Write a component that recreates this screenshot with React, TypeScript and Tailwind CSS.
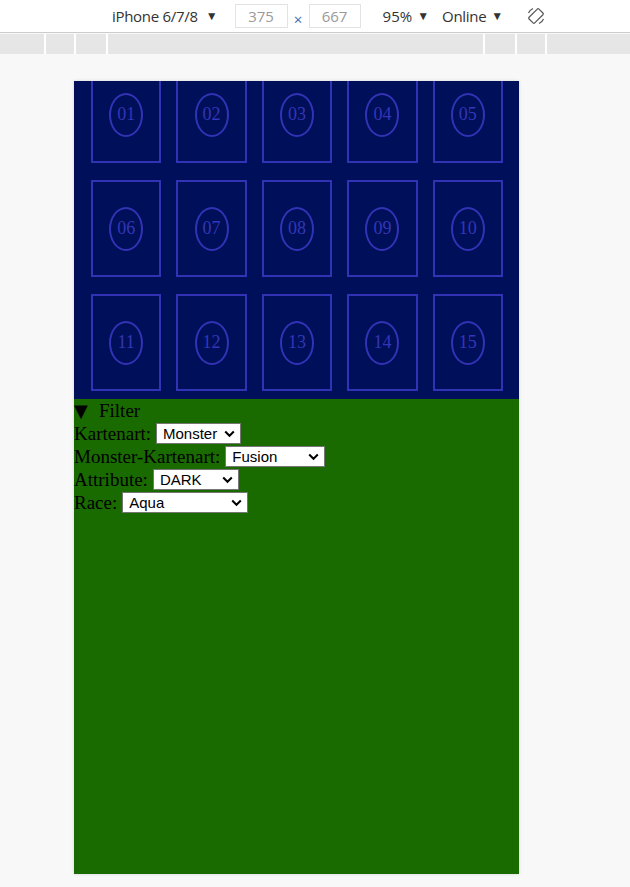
import React from 'react';

const cards = ['01', '02', '03', '04', '05', '06', '07', '08', '09', '10', '11', '12', '13', '14', '15'];

const Select: React.FC<{ value: string; width: string }> = ({ value, width }) => (
  <span className={`relative block h-[21px] ${width}`}>
    <select
      defaultValue={value}
      className="appearance-none block w-full h-[21px] bg-white border border-[#767676] pl-[6px] text-[15px] leading-[19px] text-black outline-none"
      style={{ fontFamily: '"Liberation Sans", Arial, sans-serif' }}
    >
      <option>{value}</option>
    </select>
    <svg className="absolute right-[6px] top-[7px] pointer-events-none" width="11" height="8" viewBox="0 0 11 8">
      <path d="M1.2 1.5 L5.5 5.8 L9.8 1.5" fill="none" stroke="#000" strokeWidth="2" />
    </svg>
  </span>
);

const Row: React.FC<{ label: string; children: React.ReactNode }> = ({ label, children }) => (
  <div className="flex items-center h-[23px] gap-[5px]">
    <span>{label}</span>
    {children}
  </div>
);

export default function App() {
  return (
    <div className="w-[630px] h-[887px] bg-[#f8f8f8] flex flex-col overflow-hidden" style={{ fontFamily: '"Open Sans", "Noto Sans", sans-serif' }}>
      {/* DevTools device toolbar */}
      <div className="h-[33px] bg-white border-b border-[#cccccc] flex items-center text-[15px] text-[#333]">
        <span className="ml-[112px] tracking-[-0.3px]">iPhone 6/7/8</span>
        <span className="ml-[8px] text-[12px]">▼</span>
        <div className="ml-[17px] w-[53px] h-[24px] border border-[#e3e3e3] flex items-center justify-center text-[#9a9a9a]">375</div>
        <span className="w-[21px] text-center mt-[6px] text-[15px] text-[#3a6fb0]">×</span>
        <div className="w-[52px] h-[24px] border border-[#e3e3e3] flex items-center justify-center text-[#9a9a9a]">667</div>
        <span className="ml-[22px]">95%</span>
        <span className="ml-[5px] text-[12px]">▼</span>
        <span className="ml-[13px] tracking-[-0.3px]">Online</span>
        <span className="ml-[5px] text-[12px]">▼</span>
        <svg className="ml-[23px]" width="20" height="20" viewBox="0 0 20 20">
          <g fill="none" stroke="#555" strokeWidth="1.2">
            <rect x="6" y="3" width="8" height="14" rx="1.2" transform="rotate(45 10 10)" />
            <path d="M2.5 7 A8 8 0 0 1 7 2.5" />
            <path d="M17.5 13 A8 8 0 0 1 13 17.5" />
          </g>
        </svg>
      </div>

      {/* Media query ruler */}
      <div className="h-[20px] bg-[#e6e6e6] flex mt-[1px]">
        <div className="w-[46px] border-r-2 border-white" />
        <div className="w-[30px] border-r-2 border-white" />
        <div className="w-[32px] border-r-2 border-white" />
        <div className="w-[377px] border-r-2 border-white" />
        <div className="w-[32px] border-r-2 border-white" />
        <div className="w-[30px] border-r-2 border-white" />
        <div className="flex-1" />
      </div>

      {/* Emulated device viewport */}
      <div className="ml-[74px] mt-[27px] w-[445px] h-[793px] flex flex-col shadow-[0_0_3px_rgba(0,0,0,0.15)]">
        <div className="h-[318px] bg-[#000f5a] overflow-hidden">
          <div className="grid grid-cols-5 gap-x-[15px] gap-y-[17px] pl-[17px] pr-[16px] -mt-[15px]">
            {cards.map((n) => (
              <div key={n} className="h-[97px] border-2 border-[#3232b4] flex items-center justify-center">
                <div
                  className="w-[34px] h-[44px] rounded-[50%] border-2 border-[#3232b4] flex items-center justify-center text-[18px] text-[#3535b5]"
                  style={{ fontFamily: '"Liberation Serif", "Times New Roman", serif' }}
                >
                  {n}
                </div>
              </div>
            ))}
          </div>
        </div>

        <div
          className="flex-1 bg-[#196b00] text-black text-[19px] leading-[23px]"
          style={{ fontFamily: '"Liberation Serif", "Times New Roman", serif' }}
        >
          <div className="flex items-center h-[23px]">
            <span className="text-[18px] w-[25px] font-['DejaVu_Sans',sans-serif]">▼</span>
            <span>Filter</span>
          </div>
          <Row label="Kartenart:">
            <Select value="Monster" width="w-[85px]" />
          </Row>
          <Row label="Monster-Kartenart:">
            <Select value="Fusion" width="w-[100px]" />
          </Row>
          <Row label="Attribute:">
            <Select value="DARK" width="w-[86px]" />
          </Row>
          <Row label="Race:">
            <Select value="Aqua" width="w-[126px]" />
          </Row>
        </div>
      </div>
    </div>
  );
}
